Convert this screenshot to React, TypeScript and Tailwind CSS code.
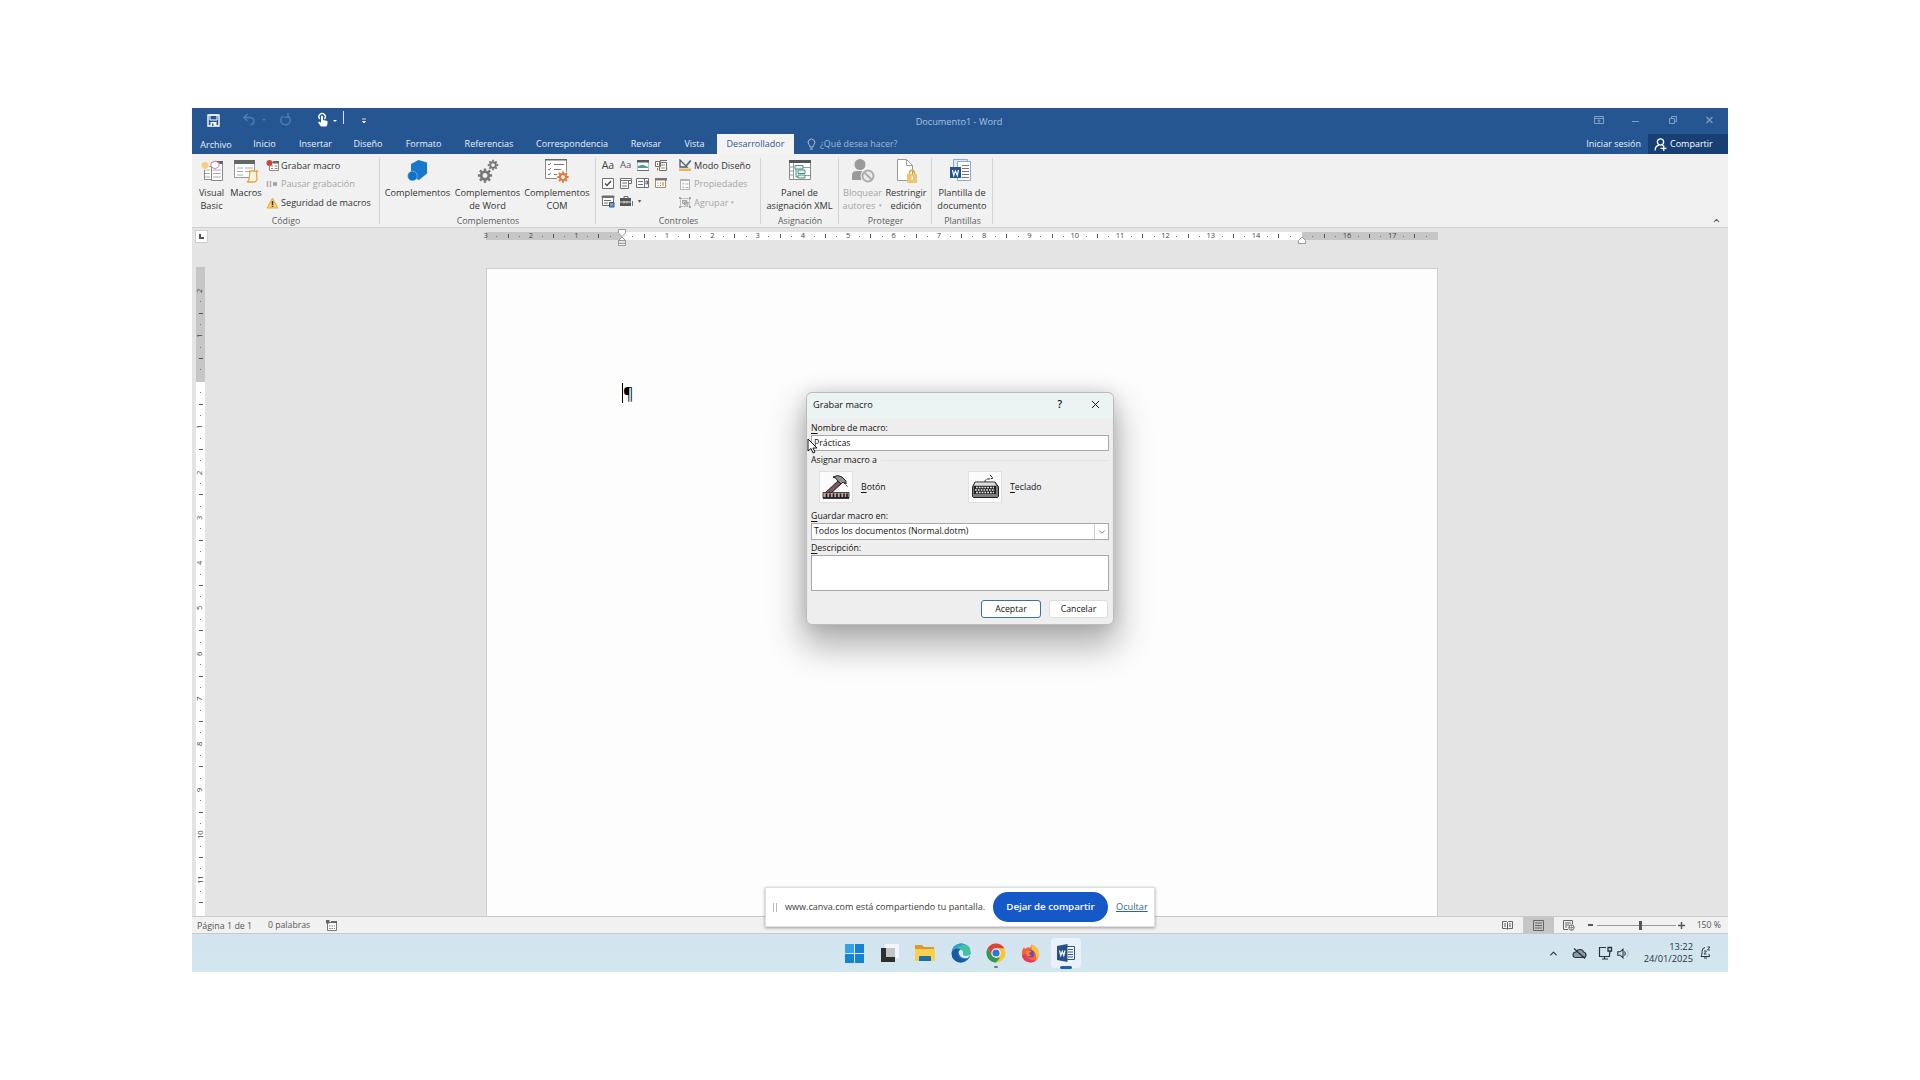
import type { ReactNode } from "react";
import { ChevronDown, ChevronUp, X } from "lucide-react";

const tabs = [
  { label: "Archivo", width: "w-12 pt-px" },
  { label: "Inicio", width: "w-[49px]" },
  { label: "Insertar", width: "w-[53px]" },
  { label: "Diseño", width: "w-[52px]" },
  { label: "Formato", width: "w-[59px]" },
  { label: "Referencias", width: "w-[72px]" },
  { label: "Correspondencia", width: "w-[94px]" },
  { label: "Revisar", width: "w-[54px]" },
  { label: "Vista", width: "w-[43px]" },
];

/* ---------- title bar ---------- */

const TitleBar = () => (
  <div className="relative flex h-[26px] items-center pb-[2px] text-white">
    <svg className="ml-[15px]" width="13" height="13" viewBox="0 0 13 13">
      <path d="M1 1h11v11H1z" fill="none" stroke="#fff" strokeWidth="1.4" />
      <path d="M3 1h7v5H3z" fill="none" stroke="#fff" />
      <path d="M3.5 8h6v4h-6z" fill="#fff" />
      <path d="M5 9.5h1.5V12H5z" fill="#26568f" />
    </svg>
    <svg className="ml-[22px]" width="54" height="14" viewBox="0 0 54 14">
      <g fill="none" stroke="#4f7bb3" strokeWidth="1.5">
        <path d="M5.500 1 2 4.500 5.500 8M2 4.500h6q4 .5 4 3.500T8.500 12" />
        <path d="M41 3.200a4.700 4.700 0 1 0 5.500.3M46 0v4.200h-4" />
      </g>
      <path d="M20 6h4l-2 2z" fill="#4f7bb3" />
    </svg>
    <svg className="ml-[20px]" width="55" height="18" viewBox="0 0 55 18">
      <path
        d="M5 15.500 2 11.500l1-1 2 1V5q1-1.200 2 0v4l4.500 1v3l-1 2.500z"
        fill="#fff"
      />
      <path d="M3.800 8a3.200 3.200 0 1 1 4.600 0" fill="none" stroke="#fff" strokeWidth="1.300" />
      <path d="M17 9h4l-2 2z" fill="#fff" />
      <path d="M27.500 0v13" stroke="#dbe6f4" />
      <path d="M46 8h4M46.500 10.500h3l-1.500 1.500z" fill="#fff" stroke="#fff" strokeWidth=".8" />
    </svg>
    <p className="absolute inset-x-0 top-[7px] pr-[2px] text-center text-[9.2px] leading-[13px] text-[#a9c1e0]">
      Documento1 - Word
    </p>
    <svg className="ml-auto mr-[11px]" width="126" height="12" viewBox="0 0 126 12">
      <g fill="none" stroke="#7d9fca">
        <path d="M3.500 2.500h9v7h-9zM3.500 4.500h9M8 9V6M6.500 7.200 8 5.700l1.500 1.500" />
        <path d="M41 7.500h7" />
        <path d="M78.500 4.500h5v5h-5zM80.500 4V2.500h5v5H84" />
        <path d="m115.500 3 6 6m0-6-6 6" strokeWidth="1.300" />
      </g>
    </svg>
  </div>
);

const TabBar = () => (
  <div className="flex h-5 items-center text-[9px] text-[#e8f0fa]">
    {tabs.map((tab) => (
      <p key={tab.label} className={`${tab.width} text-center leading-5`}>
        {tab.label}
      </p>
    ))}
    <p className="ml-px w-[77px] bg-[#f3f3f3] text-center leading-5 text-[#2b5797]">
      Desarrollador
    </p>
    <svg className="ml-[13px]" width="9" height="13" viewBox="0 0 9 13">
      <path
        d="M3 9q0-1.500-1-2.500a3.300 3.300 0 1 1 5 0Q6 7.500 6 9zM3 11h3"
        fill="none"
        stroke="#a9c1e0"
      />
    </svg>
    <p className="ml-1 text-[8.900px] text-[#9db8dc]">¿Qué desea hacer?</p>
    <p className="ml-auto mr-[7px]">Iniciar sesión</p>
    <div className="flex h-5 w-20 items-center bg-[#173f73] pl-[6px] text-white">
      <svg className="mr-[3px]" width="13" height="13" viewBox="0 0 12 12">
        <g fill="none" stroke="#fff" strokeWidth="1.200">
          <circle cx="6" cy="3.700" r="2.900" />
          <path d="M1 11.500Q1 7.500 4.500 6.500M7.500 6.500 8.500 7M6 9.500h5.500M9 7v5" />
        </g>
      </svg>
      Compartir
    </div>
  </div>
);

/* ---------- ribbon icons ---------- */

const VisualBasicIcon = () => (
  <svg width="26" height="26" viewBox="0 0 26 26">
    <path d="M5.500 8.500h10v13h-10z" fill="#fff" stroke="#888" />
    <path d="M12.500 4.500h11v18h-11z" fill="#fff" stroke="#888" />
    <path d="M14 3h10v3H14z" fill="#666" />
    <path d="M6 12h5M14 12h8M6 15.500h5M14 15.500h8M6 19h5M14 19h8" stroke="#aaa" />
    <path d="m6 3 4 2v4l-4 3-4-3V5z" fill="#f5cf8a" stroke="#fff" strokeWidth=".7" />
    <path d="m16 3 4 2v3.500L16 11l-4-2.500V5z" fill="#fff" stroke="#c78aa4" />
  </svg>
);

const MacrosIcon = () => (
  <svg width="28" height="26" viewBox="0 0 28 26">
    <path d="M2.500 2.500h20v17h-20z" fill="#fff" stroke="#999" />
    <path d="M2 2h21v4H2z" fill="#666" />
    <path d="M5 10h6M13 10h8M5 13.500h6M13 13.500h6M5 17h6" stroke="#aaa" />
    <path
      d="M18 13h8q-2 1-1.500 3l.5 5q-.5 3-3 3h-7q2-1 2-3z"
      fill="#fff3df"
      stroke="#e9a24e"
      strokeWidth="1.300"
    />
  </svg>
);

const AddinsIcon = () => (
  <svg width="24" height="26" viewBox="0 0 24 26">
    <path d="M12.500 2 21 4.500v11L13 22l-8-3V6z" fill="#1878cf" />
    <circle cx="6.500" cy="18" r="4.800" fill="#1470c4" stroke="#9cc7ee" strokeWidth=".6" />
  </svg>
);

interface IGearProps {
  x: number;
  y: number;
  size: number;
  color: string;
}

const Gear = ({ x, y, size, color }: IGearProps) => (
  <g transform={`translate(${x} ${y}) scale(${size})`} stroke={color} fill="none">
    <circle r="4" strokeWidth="2.800" />
    <path
      d="M0-5v-2.500M0 5v2.500M-5 0h-2.500M5 0h2.500M-3.600-3.600l-1.700-1.700M3.600-3.600l1.700-1.700M-3.600 3.600l-1.700 1.700M3.600 3.600l1.700 1.700"
      strokeWidth="2.600"
    />
  </g>
);

const WordAddinsIcon = () => (
  <svg width="26" height="26" viewBox="0 0 26 26">
    <Gear x={10} y={17.500} size={0.95} color="#767676" />
    <Gear x={18} y={7} size={0.7} color="#767676" />
  </svg>
);

const ComAddinsIcon = () => (
  <svg width="28" height="26" viewBox="0 0 28 26">
    <path d="M2.500 1.500h21v19h-21z" fill="#fff" stroke="#888" />
    <path d="M2 1h22v1.500H2z" fill="#666" />
    <path d="m5 6 1 1 2-2M5 11l1 1 2-2M5 16l1 1 2-2M11 6.500h10M11 11.500h7M11 16.500h4" stroke="#777" fill="none" />
    <circle cx="20" cy="19" r="6.500" fill="#f3f3f3" />
    <Gear x={20} y={19} size={0.75} color="#e07a3a" />
  </svg>
);

const XmlPanelIcon = () => (
  <svg width="24" height="26" viewBox="0 0 24 26">
    <path d="M1.500 2.500h21v19h-21z" fill="#fff" stroke="#888" />
    <path d="M1 2h22v3H1z" fill="#555" />
    <path d="M5.500 5v16M1.500 9h4M1.500 13h4M1.500 17h4M15 9.500h7M15 17.500h7" stroke="#999" />
    <path d="M7 7.500h8v3.500H7zM10 12h7v3.500h-7zM10 17h7v3h-7zM8 11v8h2" fill="#e6f1ef" stroke="#4c8f83" />
  </svg>
);

const BlockAuthorsIcon = () => (
  <svg width="26" height="26" viewBox="0 0 26 26">
    <circle cx="10" cy="6.500" r="5.500" fill="#9a9a9a" />
    <path d="M2 22v-5q0-4 5-4h6q3 0 4 3l-4 6z" fill="#9a9a9a" />
    <circle cx="18" cy="18" r="7.500" fill="#f3f3f3" />
    <circle cx="18" cy="18" r="5.500" fill="#ececec" stroke="#acacac" strokeWidth="2" />
    <path d="m14 14 8 8" stroke="#acacac" strokeWidth="2" />
  </svg>
);

const RestrictIcon = () => (
  <svg width="24" height="26" viewBox="0 0 24 26">
    <path d="M3.500 1.500h9l6 6v15h-15z" fill="#fff" stroke="#999" />
    <path d="M12.500 1.500v6h6" fill="none" stroke="#999" />
    <path d="M15.500 16v-2q2.500-4 5 0v2" fill="none" stroke="#dca94b" strokeWidth="1.500" />
    <path d="M13 16h10v9H13z" fill="#efc36f" />
    <path d="M17.500 18.500H19v3h-1.500z" fill="#fff" />
  </svg>
);

const TemplateIcon = () => (
  <svg width="24" height="26" viewBox="0 0 24 26">
    <path d="M3.500 1.500h14v18h-14z" fill="#dfe9f4" stroke="#88a9d0" />
    <path d="M7.500 3.500h13v19h-13z" fill="#fff" stroke="#88a9d0" />
    <path d="M12 7.500h7M12 10.500h7M12 13.500h7M12 16.500h7M12 19.500h7" stroke="#777" />
    <path d="M0 9h11v11H0z" fill="#24548f" />
    <path d="m2.500 12 1.200 5.500 1.800-4.500 1.800 4.500L8.500 12" fill="none" stroke="#fff" strokeWidth="1.200" />
  </svg>
);

const RecordIcon = () => (
  <svg width="13" height="12" viewBox="0 0 13 12">
    <path d="M3.500 2.500h9v8h-9z" fill="#fff" stroke="#888" />
    <path d="M7 1h6v2.500H7z" fill="#666" />
    <path d="M5 6h2M8.500 6h3M5 8.500h2M8.500 8.500h3" stroke="#888" />
    <circle cx="3.500" cy="3" r="3" fill="#c8463c" />
  </svg>
);

const PauseIcon = () => (
  <svg width="13" height="12" viewBox="0 0 13 12">
    <path d="M1.500 3v6M4.500 3v6" stroke="#aaa" strokeWidth="1.400" />
    <circle cx="9" cy="6" r="2.200" fill="#a3a3a3" />
  </svg>
);

const WarningIcon = () => (
  <svg width="13" height="12" viewBox="0 0 13 12">
    <path d="M6.500 1 12 11H1z" fill="#f6cf62" stroke="#dba53a" strokeWidth=".8" />
    <path d="M6.500 4v4M6.500 8.800v1.200" stroke="#333" strokeWidth="1.400" />
  </svg>
);

const DesignIcon = () => (
  <svg width="14" height="13" viewBox="0 0 14 13">
    <path d="M2 1v7h7z" fill="none" stroke="#4d5d70" strokeWidth="1.300" />
    <path d="m6 8 6-7 1.500 1L8 8.500z" fill="#5a6b80" />
    <path d="M1 9.500h12V12H1z" fill="#eeb35a" />
  </svg>
);

const PropertiesIcon = () => (
  <svg width="14" height="13" viewBox="0 0 14 13">
    <path d="M2.500 1.500h9v10h-9z" fill="#f8f8f8" stroke="#b4b4b4" />
    <path d="M2 1h10v2H2zM4.500 5h1.500v1.500H4.500zM4.500 8.500h1.500V10H4.500z" fill="#b4b4b4" />
    <path d="M7.500 6h3M7.500 9.500h3" stroke="#b4b4b4" />
  </svg>
);

const GroupIcon = () => (
  <svg width="14" height="13" viewBox="0 0 14 13">
    <path d="M2.500 2.500h9v8h-9z" fill="none" stroke="#a8a8a8" strokeDasharray="2 1" />
    <path d="M4.500 4.500h4v3h-4zM6.500 6h3.500v3H6.500z" fill="#d5d5d5" stroke="#a0a0a0" />
    <path d="M1 1h2v2H1zM11 1h2v2h-2zM1 10h2v2H1zM11 10h2v2h-2z" fill="#a8a8a8" />
  </svg>
);

const CtrlIcon = ({ children }: { children: ReactNode }) => (
  <svg width="14" height="13" viewBox="0 0 14 13" fill="none" stroke="#6f6f6f">
    {children}
  </svg>
);

const controlIcons: ReactNode[] = [
  <span className="text-[10.500px] leading-none text-[#444]">Aa</span>,
  <span className="text-[9.500px] leading-none text-[#555]">Aa</span>,
  <CtrlIcon>
    <path d="M1.500 1.500h11v10h-11z" fill="#fff" stroke="#bbb" />
    <path d="M1 1h12v2.500H1z" fill="#4b5a68" stroke="none" />
    <path d="M2 9V7q5-2 8 0l2 1v1z" fill="#4e9a94" stroke="none" />
    <path d="M1 11.500h12" />
  </CtrlIcon>,
  <CtrlIcon>
    <path d="M1.500 2.500h5v5h-5zM5.500 3.500h7v8h-7zM6 1.500h7" fill="#fff" />
    <path d="M7 6h4M7 9h4M3.500 9v2.500M3.500 4v2" stroke="#a08060" />
  </CtrlIcon>,
  <CtrlIcon>
    <path d="M1.500 1.500h11v10h-11z" fill="#fff" />
    <path d="m4 6.500 2 2 4-4.500" stroke="#3c5068" strokeWidth="1.500" />
  </CtrlIcon>,
  <CtrlIcon>
    <path d="M1.500 1.500h11v2h-11zM1.500 3.500h8v8h-8zM9.500 3.500v3h3v-3" fill="#fff" />
    <path d="M3 6h5M3 9h5" />
  </CtrlIcon>,
  <CtrlIcon>
    <path d="M.5 1.500h12v9H.5zM8.500 1.500v9" fill="#fff" />
    <path d="M2 4.500h5M2 7.500h5M10 4h1.500v3H10z" />
  </CtrlIcon>,
  <CtrlIcon>
    <path d="M1.500 1.500h10v9h-10z" fill="#fff" stroke="#a58b64" />
    <path d="M1 1h12v2.500H1z" fill="#777" stroke="none" />
    <path d="M3.500 6h1M6 6h1M3.500 8.500h1M6 8.500h1M9 5v4" stroke="#a5763c" />
  </CtrlIcon>,
  <CtrlIcon>
    <path d="M1.500 1.500h11v9h-11z" fill="#fff" />
    <path d="M1 1h12v1.500H1zM3 5.500h7M3 8h4" />
    <path d="M8.500 7.500h4.500V12H8.500z" fill="#7d9cc8" stroke="#2d5386" />
  </CtrlIcon>,
  <CtrlIcon>
    <path d="M5 3V1.500h4V3" />
    <path d="M1 3h11v8H1z" fill="#555" stroke="none" />
    <path d="M1 7h11M5 6v2.500M8 6v2.500" stroke="#ddd" />
    <path d="M13.500 6v5" stroke="#5577a5" />
  </CtrlIcon>,
];

/* ---------- ribbon ---------- */

interface IGroupProps {
  label: string;
  width: string;
  children: ReactNode;
}

const RibbonGroup = ({ label, width, children }: IGroupProps) => (
  <div className={`${width} relative flex shrink-0 flex-col`}>
    <div className="flex h-[61px]">{children}</div>
    <p className="pt-px text-center text-[8.800px] leading-[12px] text-[#5c5c5c]">{label}</p>
    <div className="absolute right-0 top-1 h-[66px] w-px bg-[#d4d4d4]" />
  </div>
);

interface IBigButtonProps {
  icon: ReactNode;
  lines: string[];
  width: string;
  disabled?: boolean;
  arrow?: boolean;
}

const BigButton = ({ icon, lines, width, disabled, arrow }: IBigButtonProps) => (
  <div
    className={`${width} flex shrink-0 flex-col items-center pt-1 leading-[13px] ${disabled ? "text-[#a6a6a6]" : "text-[#333]"}`}
  >
    <div className="flex h-7 items-start">{icon}</div>
    {lines.map((line, i) => (
      <p key={line} className="flex items-center whitespace-nowrap">
        {line}
        {arrow && i === 1 && <span className="ml-1 text-[5px]">▾</span>}
      </p>
    ))}
  </div>
);

interface ISmallRowProps {
  icon: ReactNode;
  label: string;
  disabled?: boolean;
}

const SmallRow = ({ icon, label, disabled }: ISmallRowProps) => (
  <div
    className={`flex h-[18.500px] items-center gap-[2px] whitespace-nowrap text-[9.150px] ${disabled ? "text-[#a6a6a6]" : "text-[#333]"}`}
  >
    {icon}
    {label}
  </div>
);

const Ribbon = () => (
  <div className="relative flex h-[74px] border-b border-[#cfcfcf] bg-[#f1f1f1] text-[9.200px]">
    <RibbonGroup label="Código" width="w-[188px]">
      <BigButton icon={<VisualBasicIcon />} lines={["Visual", "Basic"]} width="w-[39px]" />
      <BigButton icon={<MacrosIcon />} lines={["Macros"]} width="w-[30px]" />
      <div className="ml-[5px] flex flex-col pt-[2.500px]">
        <SmallRow icon={<RecordIcon />} label="Grabar macro" />
        <SmallRow icon={<PauseIcon />} label="Pausar grabación" disabled />
        <SmallRow icon={<WarningIcon />} label="Seguridad de macros" />
      </div>
    </RibbonGroup>
    <RibbonGroup label="Complementos" width="w-[216px]">
      <BigButton icon={<AddinsIcon />} lines={["Complementos"]} width="w-[75px]" />
      <BigButton icon={<WordAddinsIcon />} lines={["Complementos", "de Word"]} width="w-[65px]" />
      <BigButton icon={<ComAddinsIcon />} lines={["Complementos", "COM"]} width="w-[74px]" />
    </RibbonGroup>
    <RibbonGroup label="Controles" width="w-[165px]">
      <div className="ml-[3px] grid h-[57px] w-[71px] grid-cols-4 grid-rows-3 place-items-center pt-[2px]">
        {controlIcons.map((icon, i) => (
          <div key={i} className="flex items-center">
            {icon}
          </div>
        ))}
        <span className="ml-[3px] mr-auto text-[6px] text-[#555]">▾</span>
      </div>
      <div className="ml-2 flex flex-col pt-[2.500px]">
        <SmallRow icon={<DesignIcon />} label="Modo Diseño" />
        <SmallRow icon={<PropertiesIcon />} label="Propiedades" disabled />
        <div className="flex items-center text-[#a6a6a6]">
          <SmallRow icon={<GroupIcon />} label="Agrupar" disabled />
          <span className="ml-[3px] text-[5px]">▾</span>
        </div>
      </div>
    </RibbonGroup>
    <RibbonGroup label="Asignación" width="w-[78px]">
      <BigButton icon={<XmlPanelIcon />} lines={["Panel de", "asignación XML"]} width="w-[77px]" />
    </RibbonGroup>
    <RibbonGroup label="Proteger" width="w-[93px]">
      <BigButton icon={<BlockAuthorsIcon />} lines={["Bloquear", "autores"]} width="w-[47px]" disabled arrow />
      <BigButton icon={<RestrictIcon />} lines={["Restringir", "edición"]} width="w-10" />
    </RibbonGroup>
    <RibbonGroup label="Plantillas" width="w-[61px]">
      <BigButton icon={<TemplateIcon />} lines={["Plantilla de", "documento"]} width="w-[60px]" />
    </RibbonGroup>
    <ChevronUp className="ml-auto mr-[7px] mt-[62px] text-[#666]" size={9} strokeWidth={3} />
  </div>
);

/* ---------- rulers ---------- */

interface ITicksProps {
  from: number;
  count: number;
  hidden?: number[];
  vertical?: boolean;
}

// four cells per centimetre: number, dot, half mark, dot
const Ticks = ({ from, count, hidden = [], vertical }: ITicksProps) => (
  <>
    {Array.from({ length: count }, (_, i) => {
      const value = Math.abs(from + Math.floor(i / 4));
      const phase = i % 4;
      return (
        <div
          key={i}
          className={
            vertical
              ? "flex h-[11.335px] w-full shrink-0 items-center justify-center"
              : "flex h-full w-[11.335px] shrink-0 items-center justify-center"
          }
        >
          {phase === 0 && !hidden.includes(value) && (
            <span className={vertical ? "-rotate-90 text-[7.500px] leading-none" : "text-[7.500px] leading-none"}>
              {value}
            </span>
          )}
          {phase === 2 && <span className={vertical ? "h-px w-1 bg-[#555]" : "h-1 w-px bg-[#555]"} />}
          {phase % 2 === 1 && <span className="h-px w-px bg-[#777]" />}
        </div>
      );
    })}
  </>
);

const HorizontalRuler = () => (
  <div className="relative ml-[294px] flex h-2 w-[952px] text-[#444]">
    <div className="flex w-[136px] bg-[#c6c6c6]">
      <div className="-ml-[6px] flex">
        <Ticks from={-3} count={12} />
      </div>
    </div>
    <div className="flex w-[680px] bg-white">
      <div className="-ml-[6px] flex">
        <Ticks from={0} count={60} hidden={[0]} />
      </div>
    </div>
    <div className="flex flex-1 bg-[#c6c6c6]">
      <div className="-ml-[6px] flex">
        <Ticks from={15} count={12} hidden={[15]} />
      </div>
    </div>
    <svg className="absolute -top-[3px] left-[131px]" width="10" height="18" viewBox="0 0 10 18">
      <g fill="#fff" stroke="#999">
        <path d="M1.500.5h7V4L5 7.500 1.500 4z" />
        <path d="M1.500 14.500h7v-3L5 8l-3.500 3.500zM1.500 11.500h7v5h-7z" />
      </g>
    </svg>
    <svg className="absolute left-[811px] top-1" width="10" height="8" viewBox="0 0 10 8">
      <path d="M1.500 7.500h7v-3L5 1 1.500 4.500z" fill="#fff" stroke="#999" />
    </svg>
  </div>
);

const VerticalRuler = () => (
  <div className="ml-1 mt-[26px] flex w-[9px] shrink-0 flex-col text-[#444]">
    <div className="h-[115px] shrink-0 bg-[#c6c6c6]">
      <div className="pt-[18px]">
        <Ticks from={-2} count={8} vertical />
      </div>
    </div>
    <div className="h-[534px] shrink-0 bg-white">
      <div className="-mt-[6px]">
        <Ticks from={0} count={47} hidden={[0]} vertical />
      </div>
    </div>
  </div>
);

/* ---------- dialog ---------- */

const HammerIcon = () => (
  <svg width="28" height="26" viewBox="0 0 28 26">
    <path d="M2 20 17 6l3 3L7 21z" fill="#7a5a62" stroke="#1c1c1c" />
    <path d="M11 3q5-3 9 0l4 4v3l-3-2-2 2-4-4q0-2-4-3z" fill="#8f9394" stroke="#222" />
    <path d="m22 9 4 4" stroke="#222" strokeDasharray="1.500 1" />
    <path d="M1 18.500h26v5.500H1z" fill="#c4a3a3" stroke="#222" strokeWidth=".8" />
    <path d="M1 24h26M4.500 19.500v4M8 19.500v4M11.500 19.500v4M15 19.500v4M18.500 19.500v4M22 19.500v4M25 19.500v4" stroke="#1c1c1c" strokeWidth="1.600" />
  </svg>
);

const KeyboardIcon = () => (
  <svg width="28" height="26" viewBox="0 0 28 26">
    <path d="M14 8q0-3 3-3t5-1l-3-3" fill="none" stroke="#222" strokeDasharray="3 .7" />
    <path d="m4 8-2.500 5v9.500l1 1h24l1-1V13L24 8z" fill="#7c7c7c" stroke="#222" />
    <path d="m4.500 8.500-1.500 3h22l-1.500-3z" fill="#ddd" />
    <path d="M3 12h22v8H3z" fill="#222" />
    <path d="M5 13.500h18M4 16h20M5 18.500h18" stroke="#e8e8e8" strokeWidth="1.400" strokeDasharray="1.800 1" />
  </svg>
);

const Label = ({ text }: { text: string }) => (
  <p className="leading-3">
    <span className="underline underline-offset-2">{text[0]}</span>
    {text.slice(1)}
  </p>
);

const MacroDialog = () => (
  <div className="absolute left-[614px] top-[284px] flex h-[233px] w-[308px] flex-col rounded-md border border-[#b9bdbd] bg-[#eeeeee] text-[8.750px] text-[#111] shadow-[0_18px_34px_4px_rgba(0,0,0,0.3),0_0_16px_rgba(0,0,0,0.12)]">
    <div className="flex h-[26px] items-center rounded-t-md bg-[#ecf3f3] pb-[3px] pl-[6px] pr-[11px]">
      <p className="text-[9.200px]">Grabar macro</p>
      <p className="ml-auto mr-[27px] text-[10px] font-semibold">?</p>
      <X size={13} strokeWidth={1.800} />
    </div>
    <div className="flex flex-col px-1 pt-[3px]">
      <Label text="Nombre de macro:" />
      <div className="mt-px h-4 border border-[#a8a8a8] bg-white pl-[2px] leading-[14px]">
        Prácticas
      </div>
      <div className="mt-[3px] flex items-center gap-1">
        <p className="leading-3">Asignar macro a</p>
        <div className="h-px flex-1 bg-[#e2e2e2]" />
      </div>
      <div className="mt-[5px] flex h-8 items-center">
        <div className="ml-2 flex h-8 w-[34px] items-center justify-center border border-[#e0e0e0] bg-[#fbfbfb]">
          <HammerIcon />
        </div>
        <div className="ml-[8px] w-[107px]">
          <Label text="Botón" />
        </div>
        <div className="flex h-8 w-[34px] items-center justify-center border border-[#e0e0e0] bg-[#fbfbfb]">
          <KeyboardIcon />
        </div>
        <div className="ml-2">
          <Label text="Teclado" />
        </div>
      </div>
      <div className="mt-[7px]">
        <Label text="Guardar macro en:" />
      </div>
      <div className="mt-px flex h-[17px] items-center border border-[#a8a8a8] bg-white pl-[2px]">
        Todos los documentos (Normal.dotm)
        <div className="ml-auto flex h-full w-[14px] items-center justify-center border-l border-[#ccc]">
          <ChevronDown size={10} strokeWidth={2} color="#666" />
        </div>
      </div>
      <div className="mt-[2px]">
        <Label text="Descripción:" />
      </div>
      <div className="mt-px h-9 border border-[#a8a8a8] bg-white" />
      <div className="mr-px mt-[9px] flex justify-end gap-2">
        <div className="h-[18px] w-[60px] rounded-[3px] border border-[#3b7390] bg-white text-center leading-4">
          Aceptar
        </div>
        <div className="h-[18px] w-[59px] rounded-[3px] border border-[#dcdcdc] bg-white text-center leading-4">
          Cancelar
        </div>
      </div>
    </div>
    <svg className="absolute left-0 top-[45px]" width="12" height="17" viewBox="0 0 12 17">
      <path d="M1 1v12l3-2.500 2 4.500 2-1-2-4h4z" fill="#fff" stroke="#111" />
    </svg>
  </div>
);

/* ---------- status bar ---------- */

const StatusBar = () => (
  <div className="flex h-[18px] items-center border-y border-[#c9c9c9] bg-[#f1f1f1] text-[8.700px] text-[#555]">
    <p className="ml-[5px] w-[71px] pt-px text-[8.900px]">Página 1 de 1</p>
    <p className="w-[58px] pt-px">0 palabras</p>
    <svg width="11" height="11" viewBox="0 0 11 11">
      <path d="M1.500 2.500h9v8h-9z" fill="#fff" stroke="#777" />
      <path d="M5 1h6v2H5zM0 0h3.500v3.500H0z" fill="#666" />
      <path d="M3 6h6M3 8.500h6" stroke="#777" strokeDasharray="1.500 1" />
    </svg>
    <svg className="ml-auto mr-[10px]" width="11" height="10" viewBox="0 0 11 10">
      <path d="M.5 1.500h4l1 1 1-1h4v7h-4l-1 1-1-1h-4zM5.500 2v7M2 4h2M2 6h2M7 4h2M7 6h2" fill="none" stroke="#666" />
    </svg>
    <div className="flex h-4 w-[31px] items-center justify-center bg-[#c6c6c6]">
      <svg width="11" height="11" viewBox="0 0 11 11">
        <path d="M.5.5h10v10H.5zM2 3h7M2 5.500h7M2 8h7" fill="none" stroke="#666" />
      </svg>
    </div>
    <svg className="ml-[9px] mr-[13px]" width="12" height="11" viewBox="0 0 12 11">
      <path d="M5 9.500H.5v-9h9V4M2 3h6M2 5h4M2 7h2" fill="none" stroke="#666" />
      <circle cx="8.500" cy="7.500" r="2.700" fill="#f1f1f1" stroke="#666" />
      <path d="M6 7.500h5M8.500 5v5" stroke="#666" strokeWidth=".6" />
    </svg>
    <div className="h-[1.500px] w-[5px] bg-[#555]" />
    <div className="ml-1 flex w-[79px] items-center">
      <div className="h-px flex-1 bg-[#9a9a9a]" />
      <div className="h-[9px] w-[3px] bg-[#555]" />
      <div className="h-px w-[34px] bg-[#9a9a9a]" />
    </div>
    <svg className="ml-[2px]" width="7" height="7" viewBox="0 0 7 7">
      <path d="M0 3.500h7M3.500 0v7" stroke="#555" strokeWidth="1.400" />
    </svg>
    <p className="ml-3 mr-[7px] pt-px">150 %</p>
  </div>
);

const ShareBar = () => (
  <div className="absolute left-[573px] top-[779px] flex h-[40px] w-[390px] items-center border border-[#dedede] bg-white text-[9.700px] text-[#3c3c3c] shadow-[0_1px_3px_rgba(0,0,0,0.35)]">
    <div className="ml-[7px] mr-2 h-[9px] w-1 border-x border-[#bbb]" />
    <p className="w-[208px] whitespace-nowrap text-[9.050px]">
      www.canva.com está compartiendo tu pantalla.
    </p>
    <div className="h-[30px] w-[115px] rounded-full bg-[#1558c8] text-center font-semibold leading-[30px] text-white">
      Dejar de compartir
    </div>
    <p className="ml-2 text-[9.200px] text-[#2f6496] underline">Ocultar</p>
  </div>
);

/* ---------- taskbar ---------- */

const WindowsLogo = () => (
  <svg width="19" height="19" viewBox="0 0 19 19">
    <path d="M0 0h9v9H0zM10 0h9v9h-9zM0 10h9v9H0zM10 10h9v9h-9z" fill="#1583d2" />
    <path d="M0 0h9v9H0z" fill="#35a3e4" />
  </svg>
);

const TaskViewIcon = () => (
  <svg width="19" height="19" viewBox="0 0 19 19">
    <path d="M5 0h14v14H5z" fill="#f4f6f7" />
    <path d="M1 4h14v14H1z" fill="#2c2e30" />
    <path d="M6 4h9v9H6z" fill="#c2c5c7" />
  </svg>
);

const ExplorerIcon = () => (
  <svg width="20" height="18" viewBox="0 0 20 18">
    <path d="M0 1h7l2 2h10v6H0z" fill="#d99a2b" />
    <path d="M0 5h20v12H0z" fill="#f8cf4e" />
    <path d="M4 17v-4q0-1 1-1h10q1 0 1 1v4z" fill="#1d6fa8" />
  </svg>
);

const EdgeIcon = () => (
  <svg width="20" height="20" viewBox="0 0 20 20">
    <circle cx="10" cy="10" r="9.500" fill="#1c77bd" />
    <path d="M1 8Q3 .5 10.500.5 19 1 19.500 8q0 5-5 5-3 0-2-2 1-4-3-4.500Q4 6 1 10z" fill="#42c3a0" />
    <path d="M1 8Q3 .5 10.500.5q2 0 4 1Q7 2 1 10z" fill="#2b9fd6" />
    <path d="M1 8.500Q5 4 9.500 6.500 6 8 7 12q2 5 9 4-4 4.500-9.500 3Q-.5 16 1 8.500z" fill="#175a9e" />
    <path d="M9.500 6.500q4 1 2.500 4.500 0 2 2.500 2 3 0 5-2-.5 2.500-3 4-6 1-8-3t1-5.500z" fill="#dcecf4" />
  </svg>
);

const ChromeIcon = () => (
  <svg width="20" height="20" viewBox="0 0 20 20">
    <circle cx="10" cy="10" r="9.500" fill="#f7c63a" />
    <path d="M10 .5A9.500 9.500 0 0 1 18.300 5.300H10L5.900 12.400 1.700 5.300A9.500 9.500 0 0 1 10 .5z" fill="#d8453a" />
    <path d="M1.700 5.300 5.900 12.400 10 14.700h4L10 19.500A9.500 9.500 0 0 1 1.700 5.300z" fill="#2f9a53" />
    <circle cx="10" cy="10" r="4.700" fill="#fff" />
    <circle cx="10" cy="10" r="3.600" fill="#2f74d8" />
  </svg>
);

const FirefoxIcon = () => (
  <svg width="19" height="19" viewBox="0 0 19 19">
    <path d="M9.500 18.500Q1 18 .8 9.500.8 6 3 3l1 2 3-2 2 1 1.500-3.500q3 1 5.500 4 2.500 3 2 6-1 7.500-8.500 8z" fill="#f2672f" />
    <path d="M10.500.5q3 1 5.500 4 2.500 3 2 6-.5 3-3 5 1-6-3-9-2.500-2-1.500-6z" fill="#fbc33b" />
    <path d="M1 11q1 7 8.500 7.500 4 0 6-2.500-8 2-11-6z" fill="#e63a63" />
    <circle cx="9.800" cy="9.800" r="3.600" fill="#7b45b8" />
    <path d="M5 7.500q3-1.500 5.500 0L8 9q0 2 2.500 2.500-3 2-5-1z" fill="#f58a35" />
  </svg>
);

const WordIcon = () => (
  <svg width="18" height="18" viewBox="0 0 18 18">
    <path d="M9.500 2.500h8v13h-8z" fill="#fff" stroke="#2b5797" />
    <path d="M11 5.500h5M11 8h5M11 10.500h5M11 13h5" stroke="#2b5797" />
    <path d="M0 2 10.500 0v18L0 16z" fill="#264f8c" />
    <path d="M2.500 6.500 3.800 11.500l1.500-4 1.500 4L8 6.500" fill="none" stroke="#fff" strokeWidth="1.200" />
  </svg>
);

const Taskbar = () => (
  <div className="relative flex h-[38px] items-center bg-linear-to-b from-[#d3e3f0] to-[#d3e7ef]">
    <div className="ml-[644px] flex items-center">
      <div className="flex w-9 justify-center"><WindowsLogo /></div>
      <div className="flex w-[34px] justify-center"><TaskViewIcon /></div>
      <div className="ml-px flex w-9 justify-center"><ExplorerIcon /></div>
      <div className="flex w-[35px] justify-center"><EdgeIcon /></div>
      <div className="relative flex w-[35px] justify-center">
        <ChromeIcon />
        <span className="absolute -bottom-[5px] h-[2px] w-1 rounded-full bg-[#6d7d88]" />
      </div>
      <div className="flex w-[35px] justify-center"><FirefoxIcon /></div>
      <div className="relative ml-[3px] flex h-[30px] w-[30px] items-center justify-center rounded bg-[#e9f2f9]">
        <WordIcon />
        <span className="absolute -bottom-px h-[3px] w-3 rounded-full bg-[#1b5fae]" />
      </div>
    </div>
    <div className="ml-auto flex items-center text-[#27343d]">
      <ChevronUp size={11} strokeWidth={2.500} />
      <svg className="ml-[13px]" width="15" height="13" viewBox="0 0 15 13">
        <path d="M4 10.500q-3 0-3-2.700T4 5q1-2.500 4-2.500T11.500 5Q14 5.500 14 8t-2.500 2.500z" fill="#8d9aa2" stroke="#27343d" strokeWidth="1.200" />
        <path d="m2 1.500 11 10" stroke="#27343d" strokeWidth="1.300" />
      </svg>
      <svg className="ml-[11px]" width="15" height="14" viewBox="0 0 15 14" fill="none" stroke="#27343d">
        <path d="M8 1.500H1.500v9h10V8M4 13h6M6.500 10.500V13" strokeWidth="1.200" />
        <path d="M10 1.500h3.500V5H10zM11.700 5v3" strokeWidth="1.300" />
      </svg>
      <svg className="ml-[4px]" width="13" height="11" viewBox="0 0 13 11" fill="none" stroke="#27343d">
        <path d="M.8 3.800h2.400L6 1.200v8.600L3.200 7.200H.8zM7.500 3.500q1.500 2 0 4" strokeWidth="1.100" />
        <path d="M10 2q3 3.500 0 7" stroke="#aebdc7" />
      </svg>
      <div className="ml-[3px] w-[60px] text-right text-[9.300px] leading-[12.500px]">
        <p>13:22</p>
        <p>24/01/2025</p>
      </div>
      <svg className="mb-[2px] ml-[7px] mr-[17px]" width="11" height="13" viewBox="0 0 11 13" fill="none" stroke="#27343d">
        <path d="M5 1.500Q2 2 2 5.500V8l-1 2.500h8.500L9 8M4 12h3" />
        <path d="M4 5h2.500L4 8h2.500M7.500 1H10L7.500 4H10" strokeWidth=".9" />
      </svg>
    </div>
  </div>
);

export default function App() {
  return (
    <div className="h-[1080px] w-[1920px] overflow-hidden bg-white px-48 pt-[108px] font-['Open_Sans','Noto_Sans',sans-serif]">
      <div className="relative flex h-[864px] w-[1536px] flex-col">
        <div className="h-[46px] bg-[#265692]">
          <TitleBar />
          <TabBar />
        </div>
        <Ribbon />
        <div className="flex h-[688px] flex-col overflow-hidden bg-[#e4e4e4]">
          <div className="flex h-[13px] items-start pt-1">
            <div className="absolute left-[3px] top-[122px] flex h-[13px] w-[13px] items-center justify-center border border-[#d0d0d0] bg-white">
              <span className="h-[5px] w-[5px] border-b-2 border-l-2 border-[#555]" />
            </div>
            <HorizontalRuler />
          </div>
          <div className="flex flex-1">
            <VerticalRuler />
            <div className="ml-[281px] mt-[27px] w-[952px] border border-b-0 border-[#cdcdcd] bg-[#fdfdfd]">
              <div className="ml-[135px] mt-[114px] flex h-5 items-center border-l border-black text-[16px] leading-5 text-black">
                ¶
              </div>
            </div>
          </div>
        </div>
        <StatusBar />
        <Taskbar />
        <MacroDialog />
        <ShareBar />
      </div>
    </div>
  );
}
